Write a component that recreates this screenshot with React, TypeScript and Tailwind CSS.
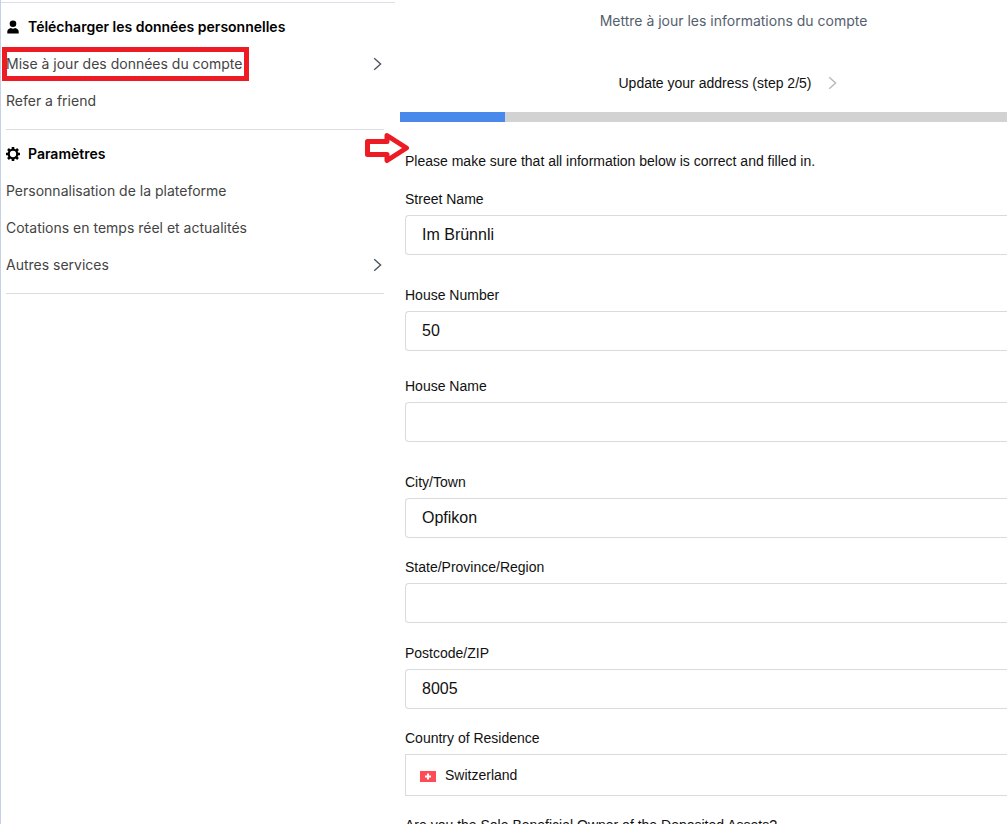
import React from 'react';

interface NavItem {
  label: string;
  expandable?: boolean;
  highlighted?: boolean;
}

interface Field {
  id: string;
  label: string;
  value: string;
  spacing: string;
}

const personalItems: NavItem[] = [
  { label: 'Mise à jour des données du compte', expandable: true, highlighted: true },
  { label: 'Refer a friend' },
];

const settingsItems: NavItem[] = [
  { label: 'Personnalisation de la plateforme' },
  { label: 'Cotations en temps réel et actualités' },
  { label: 'Autres services', expandable: true },
];

const fields: Field[] = [
  { id: 'street', label: 'Street Name', value: 'Im Brünnli', spacing: 'mb-[30px]' },
  { id: 'house-number', label: 'House Number', value: '50', spacing: 'mb-[25px]' },
  { id: 'house-name', label: 'House Name', value: '', spacing: 'mb-[30px]' },
  { id: 'city', label: 'City/Town', value: 'Opfikon', spacing: 'mb-[19px]' },
  { id: 'state', label: 'State/Province/Region', value: '', spacing: 'mb-5' },
  { id: 'postcode', label: 'Postcode/ZIP', value: '8005', spacing: 'mb-[19px]' },
];

const progress = 17.3;

const Chevron: React.FC<{ className: string }> = ({ className }) => (
  <svg width="9" height="14" viewBox="0 0 9 14" fill="none" stroke="currentColor" strokeWidth="1.4" className={className}>
    <path d="M1.2 1.2 L7.6 7 L1.2 12.8" />
  </svg>
);

const PersonIcon = () => (
  <svg width="14" height="14" viewBox="0 0 14 14" fill="#000">
    <circle cx="7" cy="3.7" r="3.3" />
    <path d="M1.3 13.6 V11.6 C1.3 9.6 3 8.5 4.9 8.1 Q7 9.2 9.1 8.1 C11 8.5 12.7 9.6 12.7 11.6 V13.6 Z" />
  </svg>
);

const GearIcon = () => (
  <svg width="14" height="14" viewBox="0 0 14 14" fill="none" stroke="#000">
    <circle cx="7" cy="7" r="4.3" strokeWidth="2.3" />
    <path
      d="M7 0 V2.4 M7 11.6 V14 M0 7 H2.4 M11.6 7 H14 M2 2 L3.6 3.6 M10.4 10.4 L12 12 M12 2 L10.4 3.6 M3.6 10.4 L2 12"
      strokeWidth="2.6"
    />
  </svg>
);

interface NavSectionProps {
  title: string;
  icon: React.ReactNode;
  items: NavItem[];
}

const NavSection: React.FC<NavSectionProps> = ({ title, icon, items }) => (
  <section className="mr-[11px] ml-[5px] border-b border-[#dcdde3] pt-[5px] pb-[10px]">
    <h2 className="flex h-[37px] items-center gap-2 font-semibold text-black">
      {icon}
      {title}
    </h2>
    <ul>
      {items.map((item) => (
        <li key={item.label}>
          <a href="#" className="relative flex h-[37px] items-center justify-between pr-0.5">
            {item.label}
            {item.expandable && <Chevron className="text-[#4b5563]" />}
            {item.highlighted && (
              <span className="absolute top-0.5 -left-1 h-[34px] w-[247px] border-5 border-[#ed1c24]" />
            )}
          </a>
        </li>
      ))}
    </ul>
  </section>
);

const SwissFlag = () => (
  <svg width="16" height="11" viewBox="0 0 16 11" className="pointer-events-none absolute top-[17px] left-[15px]">
    <rect width="16" height="11" fill="#ff4b55" />
    <path d="M7 2.5 H9 V4.5 H11 V6.5 H9 V8.5 H7 V6.5 H5 V4.5 H7 Z" fill="#fff" />
  </svg>
);

const App: React.FC = () => {
  return (
    <div className="relative flex h-screen gap-[5px] overflow-hidden bg-white text-sm">
      <aside className="w-[395px] shrink-0 border-l border-[#c6d0e6] pt-[2px] font-['Inter',sans-serif] text-[#444]">
        <nav className="border-t border-[#dcdfe8]">
          <NavSection title="Télécharger les données personnelles" icon={<PersonIcon />} items={personalItems} />
          <NavSection title="Paramètres" icon={<GearIcon />} items={settingsItems} />
        </nav>
      </aside>

      <main className="min-w-0 flex-1 font-['Liberation_Sans',sans-serif] text-[#111]">
        <header>
          <h1 className="flex h-[42px] items-center justify-center pl-[60px] font-['Inter',sans-serif] text-[#55606e]">
            Mettre à jour les informations du compte
          </h1>
          <div className="flex h-[70px] items-center justify-center pt-3 pl-12">
            <button type="button" className="flex items-center gap-4">
              Update your address (step 2/5)
              <Chevron className="text-[#b8b8b8]" />
            </button>
          </div>
        </header>
        <div className="h-[10px] bg-[#d2d2d2]">
          <div className="h-full bg-[#4a89ec]" style={{ width: `${progress}%` }} />
        </div>

        <form className="pt-[29px] pl-[5px]">
          <p className="mb-[18px] leading-5">Please make sure that all information below is correct and filled in.</p>
          {fields.map((field) => (
            <div key={field.id} className={field.spacing}>
              <label htmlFor={field.id} className="mb-[6px] block leading-5">
                {field.label}
              </label>
              <input
                id={field.id}
                type="text"
                defaultValue={field.value}
                className="block h-10 w-full rounded-l-[4px] border border-r-0 border-[#dadada] bg-white px-4 text-base outline-none"
              />
            </div>
          ))}
          <div className="mb-[19px]">
            <label htmlFor="country" className="mb-[6px] block leading-5">
              Country of Residence
            </label>
            <div className="relative">
              <select
                id="country"
                defaultValue="CH"
                className="block h-[42px] w-full appearance-none border border-r-0 border-[#dadada] bg-white pl-[39px] outline-none"
              >
                <option value="CH">Switzerland</option>
              </select>
              <SwissFlag />
            </div>
          </div>
          <p className="leading-5">Are you the Sole Beneficial Owner of the Deposited Assets?</p>
        </form>
      </main>

      {/* arrow pointing at the form */}
      <svg
        width="45"
        height="32"
        viewBox="0 0 45 32"
        fill="none"
        stroke="#ed1c24"
        strokeWidth="5"
        strokeLinejoin="round"
        className="absolute top-[132px] left-[365px]"
      >
        <path d="M2.5 9.5 H22 V3.5 L41.5 16 L22 28.5 V22.5 H2.5 Z" />
      </svg>
    </div>
  );
};

export default App;
